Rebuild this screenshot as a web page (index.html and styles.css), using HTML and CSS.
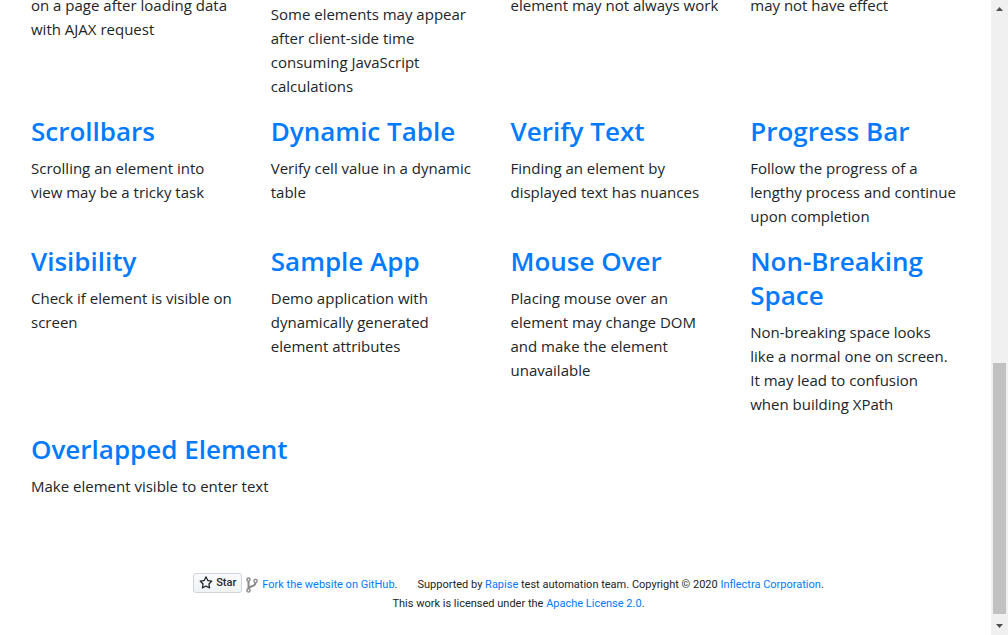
FILE: index.html
```html
<!DOCTYPE html>
<html lang="en">
<head>
<meta charset="utf-8">
<title>UI Test Automation Playground</title>
<link rel="stylesheet" href="styles.css">
</head>
<body>
<div class="page">
  <div class="content">
    <main class="grid">
      <section class="card"><p>on a page after loading data with AJAX request</p></section>
      <section class="card card-lower"><p>Some elements may appear after client-side time consuming JavaScript calculations</p></section>
      <section class="card"><p>element may not always work</p></section>
      <section class="card"><p>may not have effect</p></section>

      <section class="card"><h3><a href="#">Scrollbars</a></h3><p>Scrolling an element into<br>view may be a tricky task</p></section>
      <section class="card"><h3><a href="#">Dynamic Table</a></h3><p>Verify cell value in a dynamic table</p></section>
      <section class="card"><h3><a href="#">Verify Text</a></h3><p>Finding an element by displayed text has nuances</p></section>
      <section class="card"><h3><a href="#">Progress Bar</a></h3><p>Follow the progress of a lengthy process and continue upon completion</p></section>

      <section class="card"><h3><a href="#">Visibility</a></h3><p>Check if element is visible on screen</p></section>
      <section class="card"><h3><a href="#">Sample App</a></h3><p>Demo application with dynamically generated element attributes</p></section>
      <section class="card"><h3><a href="#">Mouse Over</a></h3><p>Placing mouse over an element may change DOM and make the element unavailable</p></section>
      <section class="card"><h3><a href="#">Non-Breaking Space</a></h3><p>Non-breaking space looks<br>like a normal one on screen.<br>It may lead to confusion<br>when building XPath</p></section>

      <section class="card card-wide"><h3><a href="#">Overlapped Element</a></h3><p>Make element visible to enter text</p></section>
    </main>
    <footer class="footer">
      <div class="footer-row">
        <button class="star" type="button">
          <svg width="14" height="14" viewBox="0 0 16 16" aria-hidden="true"><path fill="currentColor" fill-rule="evenodd" d="M8 .25a.75.75 0 01.673.418l1.882 3.815 4.21.612a.75.75 0 01.416 1.279l-3.046 2.97.719 4.192a.75.75 0 01-1.088.791L8 12.347l-3.766 1.98a.75.75 0 01-1.088-.79l.72-4.194L.818 6.374a.75.75 0 01.416-1.28l4.21-.611L7.327.668A.75.75 0 018 .25zm0 2.445L6.615 5.5a.75.75 0 01-.564.41l-3.097.45 2.24 2.184a.75.75 0 01.216.664l-.528 3.084 2.769-1.456a.75.75 0 01.698 0l2.77 1.456-.53-3.084a.75.75 0 01.216-.664l2.24-2.183-3.096-.45a.75.75 0 01-.564-.41L8 2.694z"/></svg>
          Star
        </button>
        <svg class="fork" width="12" height="16" viewBox="0 0 12 16" aria-hidden="true"><g fill="none" stroke="#888" stroke-width="1.4"><circle cx="2.5" cy="2.6" r="1.6"/><circle cx="9.5" cy="4" r="1.6"/><circle cx="2.5" cy="13.4" r="1.6"/></g><path d="M2.5 4.500v7C2.5 8.500 9.300 10.500 9.500 6" fill="none" stroke="#888" stroke-width="2"/></svg>
        <span class="fork-text"><a href="#">Fork the website on GitHub</a>.</span>
        <span>Supported by <a href="#">Rapise</a> test automation team. Copyright © 2020 <a href="#">Inflectra Corporation</a>.</span>
      </div>
      <p class="license">This work is licensed under the <a href="#">Apache License 2.0</a>.</p>
    </footer>
  </div>
  <div class="scrollbar" aria-hidden="true">
    <svg class="arrow" width="17" height="17" viewBox="0 0 17 17"><path d="M5 11h7L8.500 7z" fill="#505050"/></svg>
    <div class="track"><div class="before"></div><div class="thumb"></div><div class="after"></div></div>
    <svg class="arrow" width="17" height="17" viewBox="0 0 17 17"><path d="M5 6h7L8.500 10z" fill="#505050"/></svg>
  </div>
</div>
</body>
</html>
```
FILE: styles.css
```css
* { box-sizing: border-box; }
body {
  margin: 0;
  background: #fff;
  color: #212529;
  font-family: "Segoe UI", "Open Sans", sans-serif;
  font-size: 15px;
  line-height: 24px;
}
a { color: #007bff; text-decoration: none; }
.page { display: flex; height: 100vh; overflow: hidden; }
.content { flex: 1; padding: 0 16px; min-width: 0; }
.grid {
  display: grid;
  grid-template-columns: repeat(4, 1fr);
  margin-top: -7px;
}
.card { padding: 0 15px; }
.card-lower { padding-top: 9px; }
.card-wide { grid-column: span 2; }
h3 {
  margin: 0 0 8px;
  font-size: 26px;
  line-height: 34px;
  font-weight: 600;
}
p { margin: 0 0 16px; }
.footer {
  padding: 57px 0 0 26px;
  font-family: "Segoe UI", Roboto, sans-serif;
  font-size: 11px;
  line-height: 19px;
}
.footer-row { display: flex; justify-content: center; align-items: center; white-space: nowrap; }
.star {
  display: flex;
  align-items: center;
  gap: 3px;
  height: 20px;
  padding: 0 5px;
  border: 1px solid #d1d5da;
  border-radius: 3px;
  background: linear-gradient(#fafbfc, #eff3f6);
  color: #24292e;
  font: 500 11px "Segoe UI", Roboto, sans-serif;
}
.fork { margin: 5px 4px 0 4px; }
.fork-text { margin-right: 20px; }
.footer-row span { padding-top: 4px; }
.license { margin: 0; padding-left: 20px; text-align: center; }
.scrollbar { display: flex; flex-direction: column; width: 17px; background: #f0f0f0; }
.arrow { display: block; flex: none; }
.track { flex: 1; display: flex; flex-direction: column; padding: 0 2px; }
.before { flex: 346; }
.thumb { flex: 251; background: #c1c1c1; }
.after { flex: 4; }
```
